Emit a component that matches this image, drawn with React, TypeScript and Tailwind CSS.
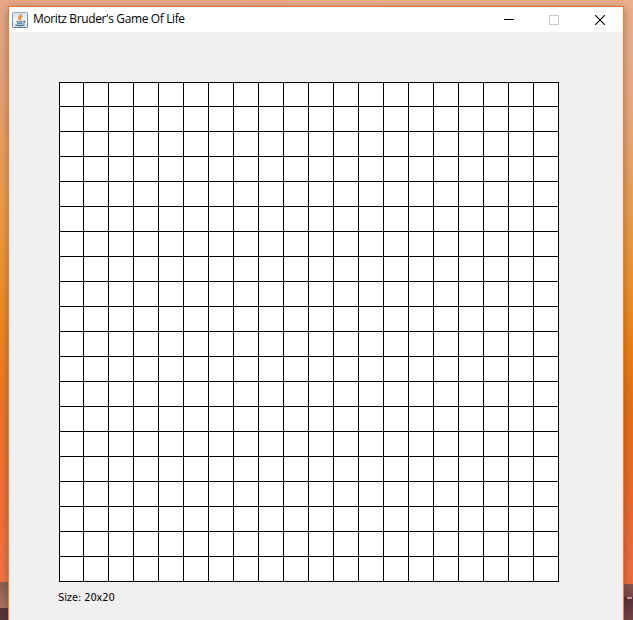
import React from 'react';

const SIZE = 20;

function JavaIcon() {
  return (
    <svg width="16" height="16" viewBox="0 0 16 16" className="block shrink-0">
      <defs>
        <linearGradient id="tile" x1="0" y1="0" x2="0" y2="1">
          <stop offset="0" stopColor="#d5e0e9" />
          <stop offset=".55" stopColor="#f4f7f9" />
          <stop offset="1" stopColor="#d3dee7" />
        </linearGradient>
        <linearGradient id="edge" x1="0" y1="0" x2="0" y2="1">
          <stop offset="0" stopColor="#8fa9bd" />
          <stop offset="1" stopColor="#5e7f99" />
        </linearGradient>
      </defs>
      <rect x=".5" y=".5" width="15" height="15" rx="1" fill="url(#tile)" stroke="url(#edge)" />
      <path d="M9.1 2C9.3 3.9 6.2 4.6 6.5 6.3c.1.8.8 1.3 1.2 2M10.6 4.4C8.8 5 7.9 5.8 8.5 6.8c.4.6.2 1.1-.2 1.6" fill="none" stroke="#ec862c" strokeWidth="1.4" />
      <path d="M4.5 9.4c1.5.6 4.5.6 6 0M5.2 11.2c1.4.6 3.7.6 5 0M11.3 9c1.7-.4 2 1.4-.2 2.2M3.5 12.9c2 1 7 1 9.1-.1" fill="none" stroke="#4a6f89" strokeWidth="1.2" />
    </svg>
  );
}

function TitleBar() {
  return (
    <header className="flex h-[25px] shrink-0 items-center bg-white pl-[3px]">
      <JavaIcon />
      <h1 className="-mt-px ml-[5px] flex-1 whitespace-nowrap text-[12px] leading-[16px] tracking-[-0.38px] text-black [font-family:'Open_Sans','Noto_Sans',sans-serif]">
        Moritz Bruder's Game Of Life
      </h1>
      <div className="flex items-center pr-[18px]">
        <button aria-label="Minimize" className="mr-[35px] block h-[10px] w-[10px]">
          <span className="block h-px w-full bg-black" />
        </button>
        <button aria-label="Maximize" disabled className="mr-[36px] block h-[10px] w-[10px] border border-[#cccccc]" />
        <button aria-label="Close" className="block h-[10px] w-[10px]">
          <svg width="10" height="10" viewBox="0 0 10 10" className="block">
            <path d="M0 0l10 10M10 0L0 10" stroke="#000" strokeWidth="1.1" />
          </svg>
        </button>
      </div>
    </header>
  );
}

function Board() {
  return (
    <div className="grid h-[500px] w-[500px] grid-cols-[24px_repeat(19,25px)] grid-rows-[24px_repeat(19,25px)] border-t border-l border-black bg-white">
      {Array.from({ length: SIZE * SIZE }, (_, i) => (
        <div key={i} className="border-r border-b border-black" />
      ))}
    </div>
  );
}

function Strip({ side }: { side: 'left' | 'right' }) {
  return side === 'left' ? (
    <div className="flex h-full w-2 shrink-0 flex-col">
      <div className="h-[490px] bg-[linear-gradient(to_bottom,#e9a988_0,#e5a27e_70px,#eda067_130px,#f29c42_220px,#f48b22_310px,#ef7f20_370px,#ef7528_420px,#f36f34_490px)]" />
      <div className="h-[92px] bg-[linear-gradient(to_bottom,#f36f34,#f47548)]" />
      <div className="h-[26px] bg-[linear-gradient(to_bottom,#8b5e53,#ab7563)]" />
      <div className="flex-1 bg-[#57343d]" />
    </div>
  ) : (
    <div className="flex h-full w-[9px] shrink-0 flex-col">
      <div className="h-[490px] bg-[linear-gradient(to_bottom,#eeb08c_0,#e9b08c_50px,#e8aa80_110px,#e8a254_200px,#ee9228_290px,#ee8112_350px,#e67114_410px,#e96a26_490px)]" />
      <div className="h-[94px] bg-[linear-gradient(to_bottom,#e96a26,#f06e42)]" />
      <div className="h-[13px] bg-[linear-gradient(to_bottom,#8c5450,#7a4849)]" />
      <div className="ml-[3px] h-[2px] w-[5px] bg-[#d99a96]" />
      <div className="flex-1 bg-[linear-gradient(to_bottom,#5c333c,#734548)]" />
    </div>
  );
}

export default function App() {
  return (
    <div className="flex h-[620px] w-[633px] overflow-hidden bg-[#583039]">
      <Strip side="left" />
      <div className="relative z-10 flex w-[616px] shrink-0 flex-col">
        <div className="h-[6px] shrink-0 bg-[linear-gradient(to_right,#e9a988,#eeb08c)]" />
        <main className="flex flex-1 flex-col border-x border-t border-[#fb7a2b] bg-[#efefef] shadow-[0_2px_9px_rgba(50,30,20,0.38)]">
          <TitleBar />
          <section className="pt-[50px] pl-[50px]">
            <Board />
            <p className="mt-[9px] -ml-px text-[11px] leading-[14px] tracking-[-0.1px] text-black [font-family:'DejaVu_Sans_Condensed','DejaVu_Sans',sans-serif] [font-stretch:condensed]">
              Size: 20x20
            </p>
          </section>
        </main>
      </div>
      <Strip side="right" />
    </div>
  );
}
